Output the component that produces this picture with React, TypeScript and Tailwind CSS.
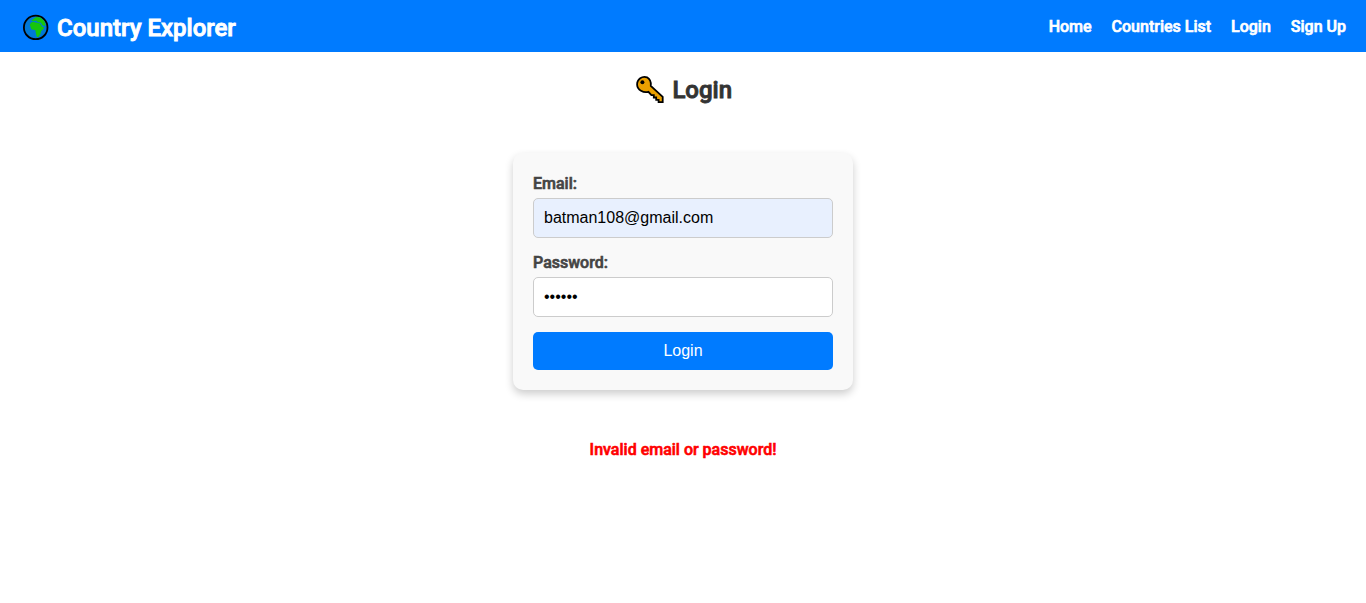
export default function App() {
  return (
    <div className="min-h-screen bg-white font-['Roboto',sans-serif] text-[#333]">
      <header className="flex h-[52px] items-center justify-between bg-[#007bff] px-5 pt-0.5 text-white">
        <div className="flex items-center pt-0.5 text-2xl font-medium [-webkit-text-stroke:0.87px_currentColor]">
          <svg viewBox="0 0 32 32" className="h-8 w-8">
            <circle cx="15.7" cy="15.4" r="11.8" fill="#0078d7" stroke="#000" strokeWidth="1.8" />
            <path d="M9.8 13 L10.8 10.8 L13 9.8 L15.5 10.4 L19 11 L20.8 12.6 L22.2 15.1 L24.1 15.1 L23.5 17 L21 19.2 L20.6 21.4 L18.5 25 L16.8 25 L15.8 21 L15.4 18.2 L11.3 17.2 Z" fill="#16c60c" />
            <path d="M11.3 8.8 L13.5 6.8 L16.5 5 L20.3 5.6 L24.3 9 L25.7 13 L24.4 14 L22.4 13.2 L20.9 10.8 L17.8 9.9 L16 8.5 L13.5 9.3 Z" fill="#16c60c" />
          </svg>
          <span className="ml-[5px]">Country Explorer</span>
        </div>
        <nav className="flex gap-5 text-base font-medium [-webkit-text-stroke:0.62px_currentColor]">
          <a>Home</a>
          <a>Countries List</a>
          <a>Login</a>
          <a>Sign Up</a>
        </nav>
      </header>
      <main className="flex flex-col items-center">
        <h2 className="mt-5 flex h-9 items-center text-2xl font-medium">
          <svg viewBox="0 0 32 32" className="h-8 w-8">
            <path d="M13 3.3 Q17.6 6 16.8 12 L28.7 22.8 V28.1 H24.6 V25.9 H22.2 V23.5 H19.8 V21.1 H17.4 L14.4 17.8 C9.5 19.2 3.3 16 3.1 10.8 C2.9 5.1 8.3 1.5 13 3.3 Z" fill="#eaa000" stroke="#000" strokeWidth="1.8" />
            <circle cx="8.4" cy="8.2" r="2" fill="#000" />
          </svg>
          <span className="ml-[6.5px] [-webkit-text-stroke:0.87px_currentColor]">Login</span>
        </h2>
        <form className="mt-[45px] flex h-[237px] w-[340px] flex-col rounded-[10px] bg-[#f9f9f9] px-5 pt-[21px] shadow-[0_4px_8px_rgba(0,0,0,0.2)]">
          <label className="text-base font-medium leading-[19px] text-[#444] [-webkit-text-stroke:0.62px_currentColor]">Email:</label>
          <input type="text" defaultValue="batman108@gmail.com" className="mt-[5px] h-10 rounded-[5px] border border-[#ccc] bg-[#e8f0fe] px-2.5 font-['Liberation_Sans',sans-serif] text-base text-black" />
          <label className="mt-[15px] text-base font-medium leading-[19px] text-[#444] [-webkit-text-stroke:0.62px_currentColor]">Password:</label>
          <input type="password" defaultValue="abcdef" className="mt-[5px] h-10 rounded-[5px] border border-[#ccc] bg-white px-2.5 font-['Liberation_Sans',sans-serif] text-base text-black" />
          <button type="button" className="mt-[15px] h-[38px] rounded-[5px] bg-[#007bff] font-['Liberation_Sans',sans-serif] text-base text-white">Login</button>
        </form>
        <p className="mt-[50px] text-base font-medium leading-[19px] text-[#f00] [-webkit-text-stroke:0.62px_currentColor]">Invalid email or password!</p>
      </main>
    </div>
  );
}
